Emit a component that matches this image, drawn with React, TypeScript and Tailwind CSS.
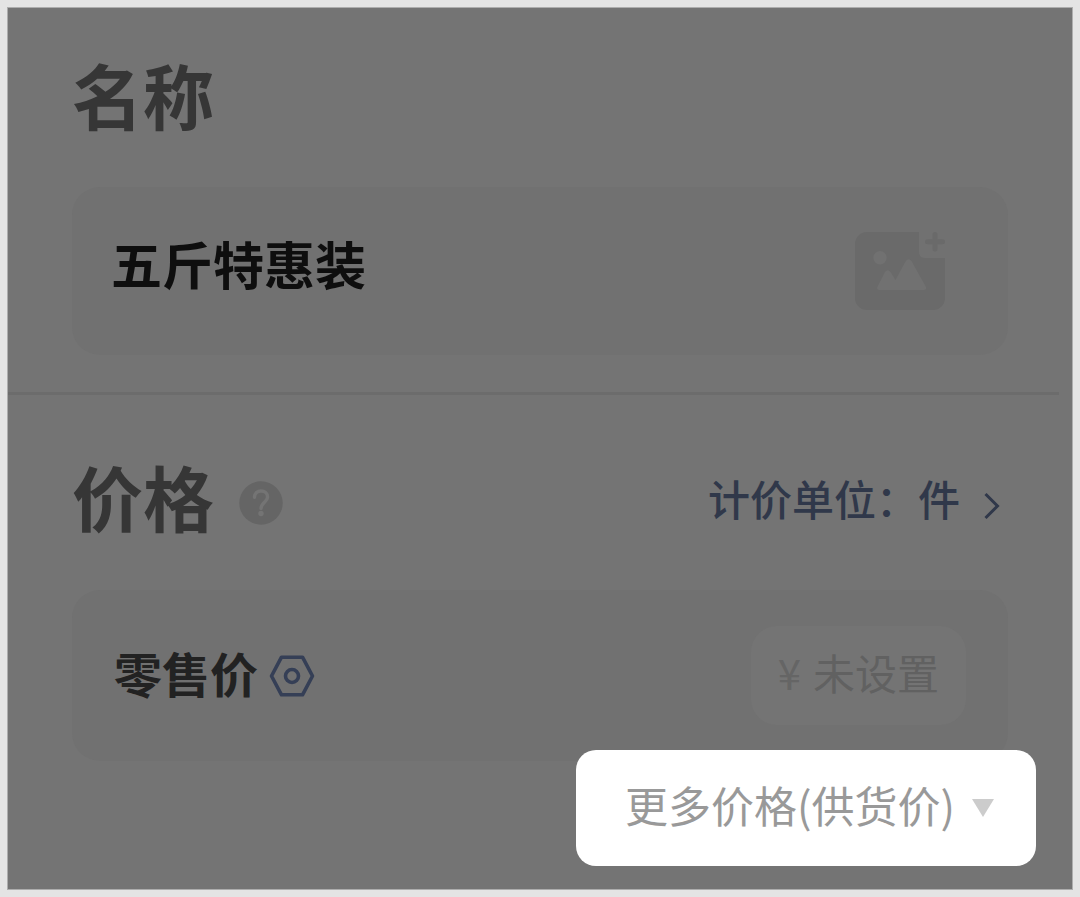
import { useState } from "react";

function AddImageIcon() {
  return (
    <svg className="h-[78px] w-[90px]" viewBox="0 0 90 78" aria-hidden="true">
      <path
        fill="#6a6a6a"
        fillRule="evenodd"
        d="M12 0H64V20Q64 26 70 26H90V66A12 12 0 0 1 78 78H12A12 12 0 0 1 0 66V12A12 12 0 0 1 12 0ZM25 19A6.7 6.7 0 1 0 25 32.4A6.7 6.7 0 1 0 25 19ZM25 58H68.500Q72.500 58 70.700 54.500L56.500 29Q53.500 25.500 50.800 29L40.500 48L35.500 40Q32.800 36.500 30 40L22.600 54.500Q21 58 25 58Z"
      />
      <path d="M80 2.500V17M72.500 9.700H87.500" stroke="#6a6a6a" strokeWidth="5" strokeLinecap="round" />
    </svg>
  );
}

function HelpIcon() {
  return (
    <svg className="size-11" viewBox="0 0 44 44" fill="none" aria-hidden="true">
      <circle cx="22" cy="22" r="21.700" fill="#656565" />
      <path
        d="M15.500 16.200C15.700 12.200 18.400 10 22 10C26 10 28.600 12.500 28.600 16C28.600 21 22 21.500 22 27.500"
        stroke="#747474"
        strokeWidth="3.400"
        strokeLinecap="round"
      />
      <circle cx="22" cy="32.500" r="2.700" fill="#747474" />
    </svg>
  );
}

function HexagonIcon() {
  return (
    <svg className="h-[42px] w-[46px]" viewBox="0 0 46 42" fill="none" stroke="#353f56" aria-hidden="true">
      <path d="M12.500 2.200H33.500L43.500 21L33.500 39.800H12.500L2.500 21Z" strokeWidth="3.600" strokeLinejoin="round" />
      <circle cx="23" cy="21" r="6.500" strokeWidth="3.600" />
    </svg>
  );
}

export default function App() {
  const [name, setName] = useState("五斤特惠装");
  const [price, setPrice] = useState("");

  return (
    <div className="flex min-h-screen flex-col bg-[#e4e4e4] p-[7px] font-['Noto_Sans_CJK_SC',sans-serif]">
      <main className="flex grow flex-col border border-[#adadad] bg-[#747474]">
        <section className="px-16 pt-[45px] pb-[37px]">
          <h2 className="text-[71px] leading-[80px] font-bold text-[#363636]">
            <label htmlFor="name">名称</label>
          </h2>
          <div className="mt-[54px] flex items-center justify-between rounded-[28px] bg-[#717171] py-[45px] pr-[63px] pl-[39px]">
            <input
              id="name"
              value={name}
              onChange={(e) => setName(e.target.value)}
              className="mb-4 h-[60px] min-w-0 grow bg-transparent text-[51px] leading-[60px] font-bold text-[#0e0e0e] outline-none"
            />
            <button type="button" aria-label="添加图片" className="shrink-0">
              <AddImageIcon />
            </button>
          </div>
        </section>

        <hr className="mr-[13px] h-[3px] border-0 bg-[#6c6c6c]" />

        <section className="flex flex-col pt-[60px] pb-[23px]">
          <div className="flex items-center justify-between pr-[72px] pl-16">
            <div className="flex items-center gap-[25px]">
              <h2 className="text-[71px] leading-[80px] font-bold text-[#363636]">价格</h2>
              <button type="button" aria-label="价格说明" className="mt-4">
                <HelpIcon />
              </button>
            </div>
            <button
              type="button"
              className="mt-1.5 flex items-center gap-6 text-[42px] leading-[60px] font-medium text-[#30384a]"
            >
              <span>计价单位：件</span>
              <svg className="mt-4 h-7 w-4" viewBox="0 0 16 28" fill="none" stroke="#30384a" strokeWidth="3" aria-hidden="true">
                <path d="M1.500 2L13.500 14L1.500 26" />
              </svg>
            </button>
          </div>

          <div className="mx-16 mt-[55px] flex items-center justify-between rounded-[28px] bg-[#717171] px-[42px] py-9">
            <div className="flex items-center gap-[11px]">
              <label htmlFor="price" className="mb-2 text-[48px] leading-[60px] font-bold text-[#222222]">
                零售价
              </label>
              <button type="button" aria-label="零售价设置">
                <HexagonIcon />
              </button>
            </div>
            <div className="flex items-center gap-3 rounded-[26px] bg-[#747474] px-[27px] pt-4 pb-[23px] text-[42px] leading-[60px]">
              <span className="text-[#656565]">¥</span>
              <input
                id="price"
                value={price}
                placeholder="未设置"
                onChange={(e) => setPrice(e.target.value)}
                className="h-[60px] w-[126px] bg-transparent text-[#616161] outline-none placeholder:text-[#616161]"
              />
            </div>
          </div>

          <button
            type="button"
            className="relative -mt-[11px] mr-9 flex items-center gap-[17px] self-end rounded-[20px] bg-white pt-6 pr-[42px] pb-8 pl-[49px] text-[43px] leading-[60px] text-[#999999]"
          >
            <span>更多价格(供货价)</span>
            <svg className="mt-2 h-[18px] w-[22px]" viewBox="0 0 22 18" fill="#cccccc" aria-hidden="true">
              <path d="M0 0H22L11 18Z" />
            </svg>
          </button>
        </section>
      </main>
    </div>
  );
}
